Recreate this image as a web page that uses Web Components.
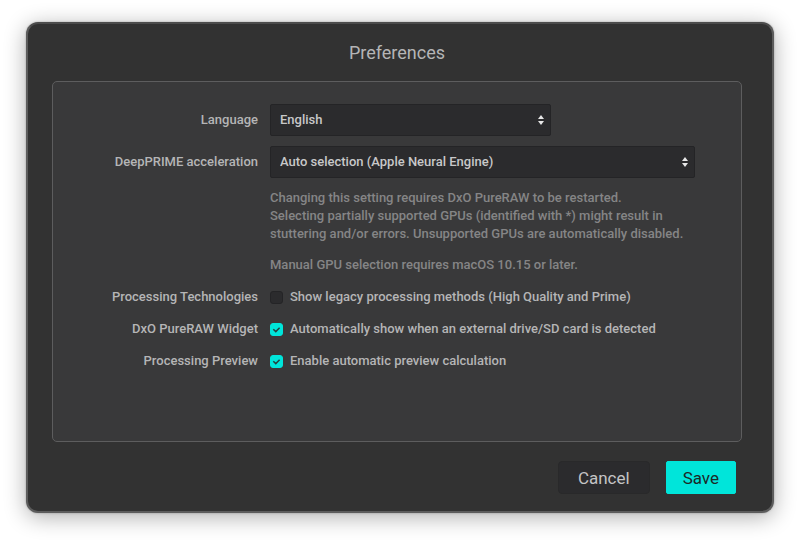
<!DOCTYPE html>
<html lang="en">
<head>
<meta charset="utf-8">
<meta name="viewport" content="width=device-width, initial-scale=1">
<title>Preferences</title>
<style>
  body {
    margin: 0;
    background: #fff;
    color: #b5b5b6;
    font-family: Roboto, "Liberation Sans", sans-serif;
    font-size: 13px;
    font-weight: 500;
    line-height: 18px;
    --label-width: 205px;
    --label-gap: 12px;
    --field: #2b2b2d;
    --field-edge: #242426;
    --accent: #00e5da;
  }
</style>
</head>
<body>
<pref-window heading="Preferences">
  <pref-select label="Language" options='["English", "Français", "Deutsch"]' size="short"></pref-select>
  <pref-select label="DeepPRIME acceleration" options='["Auto selection (Apple Neural Engine)", "CPU only"]'></pref-select>
  <pref-note>
    <p>Changing this setting requires DxO PureRAW to be restarted.<br>Selecting partially supported GPUs (identified with *) might result in stuttering and/or errors. Unsupported GPUs are automatically disabled.</p>
    <p>Manual GPU selection requires macOS 10.15 or later.</p>
  </pref-note>
  <pref-check label="Processing Technologies">Show legacy processing methods (High Quality and Prime)</pref-check>
  <pref-check label="DxO PureRAW Widget" checked>Automatically show when an external drive/SD card is detected</pref-check>
  <pref-check label="Processing Preview" checked>Enable automatic preview calculation</pref-check>
  <pref-button slot="actions">Cancel</pref-button>
  <pref-button slot="actions" primary>Save</pref-button>
</pref-window>

<script>
class PrefWindow extends HTMLElement {
  constructor() {
    super();
    this.attachShadow({ mode: 'open' });
  }

  connectedCallback() {
    this.shadowRoot.innerHTML = `
      <style>
        :host {
          display: flex;
          flex-direction: column;
          box-sizing: border-box;
          min-height: calc(100vh - 53px);
          margin: 22px 26px 31px;
          padding: 17px 30px 17px 24px;
          border: 2px solid #5c5c5c;
          border-top-color: #4c4c4c;
          border-radius: 12px;
          background: #323232;
          box-shadow: 0 4px 22px rgba(0, 0, 0, 0.32), 0 0 2px rgba(0, 0, 0, 0.3);
        }
        h1 {
          margin: 0 0 16px;
          font-size: 18px;
          font-weight: 400;
          line-height: 24px;
          text-align: center;
        }
        main {
          flex: 1;
          padding: 22px 46px 22px 0;
          border: 1px solid #5d5d5e;
          border-radius: 5px;
          background: #39393a;
        }
        footer {
          display: flex;
          justify-content: flex-end;
          gap: 16px;
          margin-top: 19px;
          padding-right: 6px;
        }
      </style>
      <h1></h1>
      <main><slot></slot></main>
      <footer><slot name="actions"></slot></footer>
    `;
    this.shadowRoot.querySelector('h1').textContent = this.getAttribute('heading');
  }
}

class PrefSelect extends HTMLElement {
  constructor() {
    super();
    this.attachShadow({ mode: 'open' });
  }

  connectedCallback() {
    const options = JSON.parse(this.getAttribute('options') || '[]');
    this.shadowRoot.innerHTML = `
      <style>
        :host {
          display: grid;
          grid-template-columns: var(--label-width) minmax(0, 1fr);
          column-gap: var(--label-gap);
          align-items: center;
          margin-bottom: 10px;
        }
        label {
          text-align: right;
        }
        .field {
          display: grid;
          align-items: center;
        }
        :host([size="short"]) .field {
          width: 66%;
        }
        select, svg {
          grid-area: 1 / 1;
        }
        select {
          appearance: none;
          width: 100%;
          height: 32px;
          margin: 0;
          padding: 0 24px 0 9px;
          border: 1px solid var(--field-edge);
          border-radius: 2px;
          background: var(--field);
          color: #c8c8c9;
          font: inherit;
        }
        svg {
          justify-self: end;
          margin-right: 7px;
          pointer-events: none;
        }
      </style>
      <label for="control"></label>
      <div class="field">
        <select id="control"></select>
        <svg width="6" height="10" viewBox="0 0 6 10" fill="#e8e8e8" aria-hidden="true">
          <path d="M3 0 6 4H0zM0 6h6L3 10z"/>
        </svg>
      </div>
    `;
    this.shadowRoot.querySelector('label').textContent = this.getAttribute('label');
    const select = this.shadowRoot.querySelector('select');
    options.forEach((text) => select.add(new Option(text)));
  }
}

class PrefNote extends HTMLElement {
  constructor() {
    super();
    this.attachShadow({ mode: 'open' });
    this.shadowRoot.innerHTML = `
      <style>
        :host {
          display: block;
          margin: 11px 0 14px calc(var(--label-width) + var(--label-gap));
          color: #858586;
        }
        ::slotted(p) {
          margin: 0 0 13px;
        }
      </style>
      <slot></slot>
    `;
  }
}

class PrefCheck extends HTMLElement {
  constructor() {
    super();
    this.attachShadow({ mode: 'open' });
  }

  connectedCallback() {
    this.shadowRoot.innerHTML = `
      <style>
        :host {
          display: grid;
          grid-template-columns: var(--label-width) minmax(0, 1fr);
          column-gap: var(--label-gap);
          margin-bottom: 14px;
        }
        .name {
          text-align: right;
        }
        label {
          display: flex;
          align-items: center;
          gap: 7px;
        }
        .box {
          display: grid;
          flex: none;
        }
        input, svg {
          grid-area: 1 / 1;
        }
        input {
          appearance: none;
          box-sizing: border-box;
          width: 13px;
          height: 13px;
          margin: 0;
          border: 1px solid var(--field-edge);
          border-radius: 3px;
          background: var(--field);
        }
        input:checked {
          border-color: var(--accent);
          background: var(--accent);
        }
        svg {
          visibility: hidden;
          pointer-events: none;
        }
        input:checked + svg {
          visibility: visible;
        }
      </style>
      <span class="name"></span>
      <label>
        <span class="box">
          <input type="checkbox">
          <svg width="13" height="13" viewBox="0 0 13 13" fill="none" stroke="#25403f" stroke-width="1.5" aria-hidden="true">
            <path d="M3.3 6.2 5.8 8.6 9.6 4.8"/>
          </svg>
        </span>
        <span><slot></slot></span>
      </label>
    `;
    this.shadowRoot.querySelector('.name').textContent = this.getAttribute('label');
    this.shadowRoot.querySelector('input').checked = this.hasAttribute('checked');
  }
}

class PrefButton extends HTMLElement {
  constructor() {
    super();
    this.attachShadow({ mode: 'open' });
    this.shadowRoot.innerHTML = `
      <style>
        :host {
          display: block;
        }
        button {
          display: block;
          height: 33px;
          margin: 0;
          padding: 0 19px;
          border: 1px solid #29292a;
          border-radius: 4px;
          background: var(--field);
          color: #c4c4c5;
          font: inherit;
          font-size: 17px;
          font-weight: 400;
        }
        :host([primary]) button {
          padding: 0 16px;
          border-color: var(--accent);
          border-radius: 2px;
          background: var(--accent);
          color: #1c2827;
        }
      </style>
      <button type="button"><slot></slot></button>
    `;
  }
}

customElements.define('pref-window', PrefWindow);
customElements.define('pref-select', PrefSelect);
customElements.define('pref-note', PrefNote);
customElements.define('pref-check', PrefCheck);
customElements.define('pref-button', PrefButton);
</script>
</body>
</html>
